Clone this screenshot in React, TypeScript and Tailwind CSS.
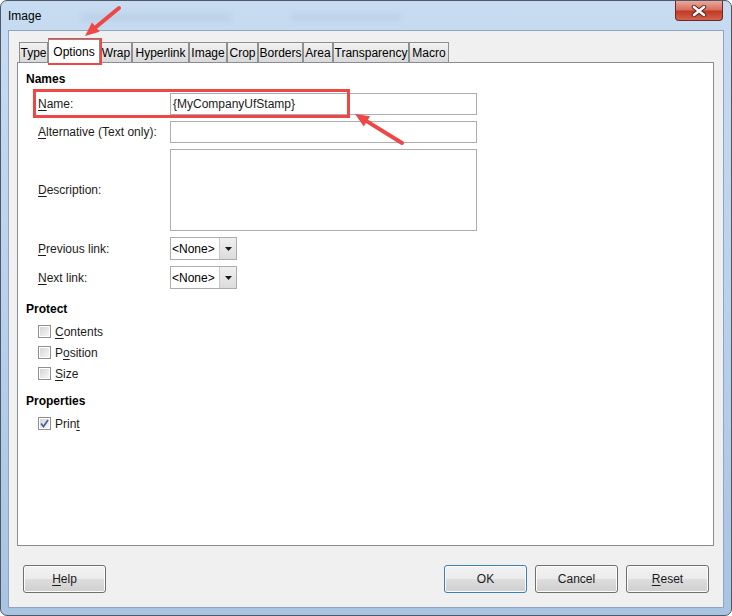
import React from "react";

const tabs = [
  { label: "Type", w: "w-[29px]" },
  { label: "Options", w: "w-[52px]", active: true },
  { label: "Wrap", w: "w-[32px]" },
  { label: "Hyperlink", w: "w-[57px]" },
  { label: "Image", w: "w-[38px]" },
  { label: "Crop", w: "w-[31px]" },
  { label: "Borders", w: "w-[45px]" },
  { label: "Area", w: "w-[30px]" },
  { label: "Transparency", w: "w-[76px]" },
  { label: "Macro", w: "w-[40px]" },
];

// label with one underlined access key
function Key({ pre = "", k, post = "" }: { pre?: string; k: string; post?: string }) {
  return (
    <span>
      {pre}
      <span className="underline underline-offset-2">{k}</span>
      {post}
    </span>
  );
}

function TextBox({ value, tall }: { value?: string; tall?: boolean }) {
  return (
    <div
      className={`w-[307px] ${tall ? "h-[82px]" : "h-[22px]"} border border-[#abadb3] bg-white px-[2px] flex ${tall ? "items-start" : "items-center"} text-[#1b1b1b]`}
    >
      {value}
    </div>
  );
}

function Dropdown() {
  return (
    <div className="w-[67px] h-[23px] border border-[#abadb3] bg-white flex items-stretch">
      <div className="flex-1 flex items-center pl-[1px]">&lt;None&gt;</div>
      <div className="w-[17px] border-l border-[#c7c7c7] bg-gradient-to-b from-[#f0f0f0] to-[#dcdcdc] flex items-center justify-center">
        <svg width="7" height="4" viewBox="0 0 7 4">
          <polygon points="0,0 7,0 3.5,4" fill="#1a1a1a" />
        </svg>
      </div>
    </div>
  );
}

function Row({ label, children }: { label: React.ReactNode; children: React.ReactNode }) {
  return (
    <div className="flex items-center">
      <div className="w-[132px] text-[#1b1b1b]">{label}</div>
      {children}
    </div>
  );
}

function Check({ label, checked }: { label: React.ReactNode; checked?: boolean }) {
  return (
    <div className="h-[21px] flex items-center gap-[4px]">
      <div className="w-[13px] h-[13px] border border-[#8e8f8f] bg-white p-[1px]">
        <div className="w-full h-full bg-gradient-to-br from-[#d6d6d6] to-[#f7f7f7] flex items-center justify-center">
          {checked && (
            <svg width="9" height="9" viewBox="0 0 9 9">
              <path d="M1 4.5 L3.5 7.5 L8 1" stroke="#4b61a0" strokeWidth="1.8" fill="none" />
            </svg>
          )}
        </div>
      </div>
      <span className="text-[#1b1b1b]">{label}</span>
    </div>
  );
}

function Button({ children, primary }: { children: React.ReactNode; primary?: boolean }) {
  return (
    <div
      className={`w-[83px] h-[28px] rounded-[3px] border ${primary ? "border-[#3c7fb1]" : "border-[#707070]"} flex items-center justify-center text-[#1b1b1b] bg-[linear-gradient(#f2f2f2_0%,#ebebeb_50%,#dddddd_51%,#cfcfcf_100%)] shadow-[inset_0_0_0_1px_#fcfcfc]`}
    >
      {children}
    </div>
  );
}

export default function App() {
  return (
    <div className="relative w-[732px] h-[616px] rounded-[7px] border border-[#4e5866] bg-gradient-to-b from-[#c7dcf1] via-[#b9d1eb] to-[#a9c4e1] flex flex-col font-['Liberation_Sans',sans-serif] text-[12px] overflow-hidden">
      {/* blurred glass behind the title */}
      <div className="absolute left-[80px] top-[13px] w-[150px] h-[7px] bg-[#7f95ad] opacity-15 blur-[3px]" />
      <div className="absolute left-[290px] top-[13px] w-[110px] h-[7px] bg-[#7f95ad] opacity-15 blur-[3px]" />

      {/* title bar */}
      <div className="relative h-[29px] flex items-center pl-[7px] text-black">Image</div>
      <div className="absolute right-[8px] top-0 w-[48px] h-[20px] rounded-b-[4px] border border-t-0 border-[#6b2a22] bg-[linear-gradient(#e9a99b_0%,#d7715f_45%,#c23a26_55%,#d4624c_100%)] flex items-center justify-center">
        <svg width="16" height="12" viewBox="0 0 16 12">
          <path d="M3 2 L13 10 M13 2 L3 10" stroke="#5a2019" strokeWidth="4.4" strokeLinecap="round" />
          <path d="M3 2 L13 10 M13 2 L3 10" stroke="#ffffff" strokeWidth="2.6" strokeLinecap="round" />
        </svg>
      </div>

      {/* client */}
      <div className="flex-1 mx-[7px] mb-[7px] border border-[#8fa6c0] bg-[#f0f0f0] flex flex-col pt-[8px]">
        <div className="ml-[8px] mr-[9px]">
          <div className="h-[23px] flex items-end pl-[2px]">
            {tabs.map((t) =>
              t.active ? (
                <div
                  key={t.label}
                  className={`${t.w} h-[24px] -mb-px relative z-10 bg-white border border-b-0 border-[#898c95] flex items-center justify-center text-black`}
                >
                  {t.label}
                </div>
              ) : (
                <div
                  key={t.label}
                  className={`${t.w} h-[20px] border border-b-0 border-[#8e8f8f] bg-gradient-to-b from-[#f2f2f2] to-[#d9d9d9] flex items-center justify-center text-black`}
                >
                  {t.label}
                </div>
              )
            )}
          </div>

          <div className="h-[484px] border border-[#898c95] bg-white pt-[8px] pl-[8px]">
            <div className="h-[16px] leading-[16px] font-bold text-black">Names</div>
            <div className="mt-[6px] pl-[12px] flex flex-col gap-[6px]">
              <Row label={<Key k="N" post="ame:" />}>
                <TextBox value="{MyCompanyUfStamp}" />
              </Row>
              <Row label={<Key k="A" post="lternative (Text only):" />}>
                <TextBox />
              </Row>
              <Row label={<Key k="D" post="escription:" />}>
                <TextBox tall />
              </Row>
              <Row label={<Key k="P" post="revious link:" />}>
                <Dropdown />
              </Row>
              <Row label={<Key k="N" post="ext link:" />}>
                <Dropdown />
              </Row>
            </div>

            <div className="mt-[12px] h-[16px] leading-[16px] font-bold text-black">Protect</div>
            <div className="mt-[4px] pl-[12px]">
              <Check label={<Key k="C" post="ontents" />} />
              <Check label={<Key pre="P" k="o" post="sition" />} />
              <Check label={<Key k="S" post="ize" />} />
            </div>

            <div className="mt-[9px] h-[16px] leading-[16px] font-bold text-black">Properties</div>
            <div className="mt-[4px] pl-[12px]">
              <Check label={<Key pre="Prin" k="t" />} checked />
            </div>
          </div>
        </div>

        <div className="mt-[19px] flex px-[14px]">
          <Button>
            <Key k="H" post="elp" />
          </Button>
          <div className="ml-auto flex gap-[8px]">
            <Button primary>OK</Button>
            <Button>Cancel</Button>
            <Button>
              <Key k="R" post="eset" />
            </Button>
          </div>
        </div>
      </div>

      {/* annotations */}
      <div className="absolute left-[47px] top-[37px] w-[54px] h-[27px] border-[3px] border-[#ef4646]" />
      <div className="absolute left-[32px] top-[88px] w-[317px] h-[29px] border-[3px] border-[#ef4646]" />
      <svg className="absolute left-0 top-0 pointer-events-none" width="732" height="616" viewBox="-1 -1 732 616">
        <line x1="117" y1="6" x2="94" y2="25" stroke="#ef4646" strokeWidth="4" strokeLinecap="round" />
        <polygon points="83,34 97.6,29.7 90,20.5" fill="#ef4646" />
        <line x1="400" y1="141" x2="365" y2="119.4" stroke="#ef4646" strokeWidth="4" strokeLinecap="round" />
        <polygon points="353,112 368.1,114.3 361.8,124.5" fill="#ef4646" />
      </svg>
    </div>
  );
}
